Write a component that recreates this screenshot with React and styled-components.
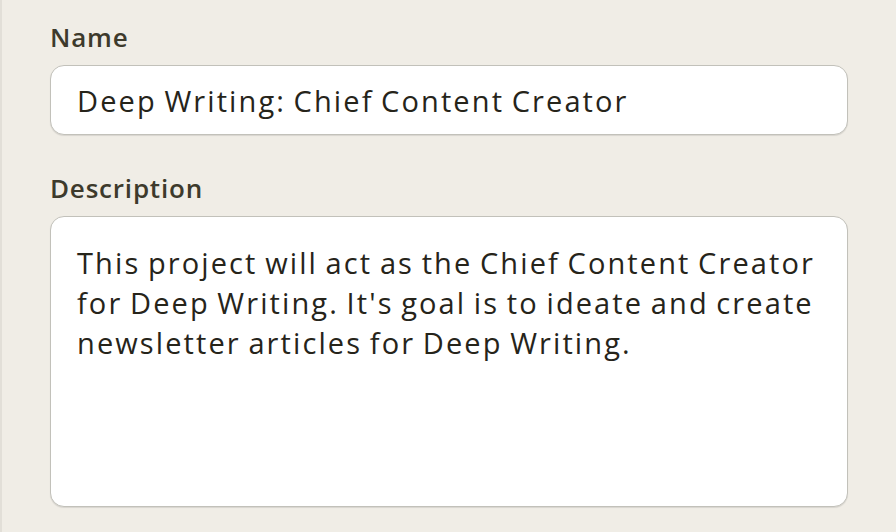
import React from 'react';
import styled, { createGlobalStyle } from 'styled-components';

const GlobalStyle = createGlobalStyle`
  html, body {
    margin: 0;
    padding: 0;
    background: #f0ede6;
  }
  * {
    box-sizing: border-box;
  }
`;

const Page = styled.main`
  width: 896px;
  height: 532px;
  background: #f0ede6;
  border-left: 2px solid #e2dfd8;
  padding: 21px 48px 0 48px;
  font-family: "Open Sans", "Noto Sans", sans-serif;
  display: flex;
  flex-direction: column;
  gap: 37px;
`;

const Field = styled.div`
  display: flex;
  flex-direction: column;
  gap: 12px;
`;

const Label = styled.label`
  font-size: 26px;
  font-weight: 600;
  letter-spacing: 0.8px;
  color: #3d3a2c;
  line-height: 32px;
`;

const boxStyles = `
  width: 100%;
  background: #fff;
  border: 1.5px solid #c2c1ba;
  border-radius: 14px;
  box-shadow: 0 1px 1px rgba(0, 0, 0, 0.1);
  font-family: "Open Sans", "Noto Sans", sans-serif;
  font-size: 29px;
  letter-spacing: 2.1px;
  word-spacing: -2px;
  color: #26241a;
  outline: none;
`;

const TextInput = styled.input`
  ${boxStyles}
  height: 70px;
  padding: 0 26px;
`;

const TextArea = styled.textarea`
  ${boxStyles}
  height: 291px;
  padding: 26px 22px 22px 26px;
  line-height: 40px;
  resize: none;
`;

const App = () => (
  <>
    <GlobalStyle />
    <Page>
      <Field>
        <Label htmlFor="name">Name</Label>
        <TextInput id="name" readOnly value="Deep Writing: Chief Content Creator" />
      </Field>
      <Field>
        <Label htmlFor="description">Description</Label>
        <TextArea
          id="description"
          readOnly
          value="This project will act as the Chief Content Creator for Deep Writing. It's goal is to ideate and create newsletter articles for Deep Writing."
        />
      </Field>
    </Page>
  </>
);

export default App;
